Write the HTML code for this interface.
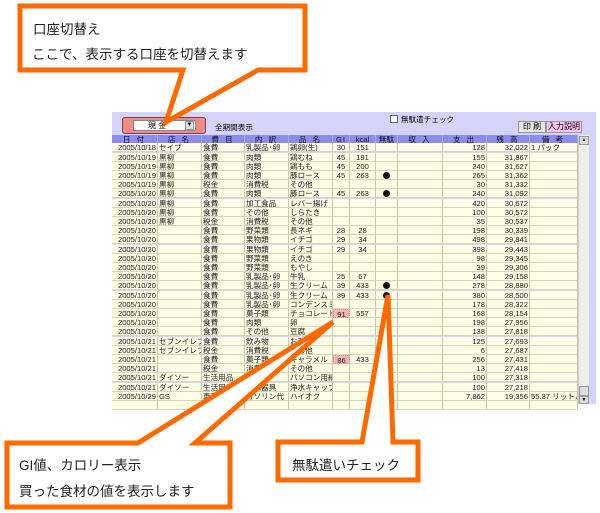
<!DOCTYPE html>
<html><head><meta charset="utf-8"><style>
*{margin:0;padding:0;box-sizing:border-box}
body{width:600px;height:513px;background:#fff;position:relative;overflow:hidden;font-family:"Liberation Sans","Noto Sans CJK JP",sans-serif}
#panel{position:absolute;left:112px;top:112px;width:484px;height:292px;background:#d4d4fa}
.r{position:absolute;left:112px;height:9.2px;display:flex;font-size:7.6px;line-height:9px;color:#222}
.r span{display:block;height:100%;border-right:1px solid #c9c9a8;border-bottom:1px solid #d6d6b8;background:#fefee6;white-space:nowrap;overflow:hidden;padding:0 1px}
.h span{background:#8c8cee;color:#111;text-align:center;border-color:#a8a8f4;letter-spacing:2px}
.c1{width:46px;text-align:right}.c2{width:44px}.c3{width:43px}.c4{width:44px}.c5{width:44px}
.c6{width:17px;text-align:center}.c7{width:26px;text-align:center}.c8{width:22px;text-align:center}
.c9{width:45px}.c10{width:44px;text-align:right}.c11{width:43px;text-align:right}.c12{width:48px}
.pk{background:#f6b6b6!important;border:1px dotted #d88!important}
.dot{display:inline-block;width:7px;height:7px;border-radius:50%;background:#111;margin-top:1px}
.t{position:absolute;font-size:13.5px;color:#222;white-space:nowrap}
</style></head><body>
<div id="panel"></div>
<div style="position:absolute;left:122px;top:117px;width:84px;height:17px;background:#f28a8a;border:1px solid #744;border-radius:3px"></div>
<div style="position:absolute;left:133px;top:120px;width:63px;height:11px;background:#fff;border:1px solid #888;font-size:8px;line-height:9px;padding-left:14px">現 金</div>
<div style="position:absolute;left:185px;top:121px;width:9px;height:9px;background:#ddd;border:1px solid #999;font-size:6px;line-height:7px;text-align:center">▼</div>
<div style="position:absolute;left:215px;top:122px;font-size:7.6px">全期間表示</div>
<div style="position:absolute;left:390px;top:115px;width:8px;height:8px;border:1px solid #666;background:#fff"></div>
<div style="position:absolute;left:401px;top:114px;font-size:7.6px">無駄遣チェック</div>
<div style="position:absolute;left:518px;top:121px;width:28px;height:12px;background:#e6e6e6;border:1px solid #999;font-size:8px;line-height:10px;text-align:center">印 刷</div>
<div style="position:absolute;left:546px;top:121px;width:36px;height:12px;background:#ffc4f4;border:1px solid #999;font-size:8px;line-height:10px;text-align:center">入力説明</div>
<div class="r h" style="top:135px"><span class="c1">日 付</span><span class="c2">店 名</span><span class="c3">費 目</span><span class="c4">内 訳</span><span class="c5">品 名</span><span class="c6" style="letter-spacing:1px">GI</span><span class="c7" style="letter-spacing:0">kcal</span><span class="c8" style="letter-spacing:0">無駄</span><span class="c9">収 入</span><span class="c10" style="text-align:center">支 出</span><span class="c11" style="text-align:center">残 高</span><span class="c12">備 考</span></div>
<div id="rows"></div>
<div style="position:absolute;left:578px;top:135px;width:11px;height:269px;background:#eeeeea;border-left:1px solid #ccc"></div>
<div style="position:absolute;left:579px;top:136px;width:10px;height:9px;background:#ddd;border:1px solid #999;font-size:5px;line-height:7px;text-align:center">▲</div>
<div style="position:absolute;left:579px;top:386px;width:10px;height:10px;background:#ddd;border:1px solid #999"></div>
<div style="position:absolute;left:579px;top:396px;width:10px;height:8px;background:#ddd;border:1px solid #999;font-size:5px;line-height:6px;text-align:center">▼</div>
<svg style="position:absolute;left:0;top:0" width="600" height="513">
<g fill="#fff" stroke="#ff6a00" stroke-width="5" stroke-linejoin="miter">
<polygon points="20,6 305,6 305,70 258,70 166,122 183,70 20,70"/>
<polygon points="7,443 138,443 333,322 195,443 230,443 230,507 7,507"/>
<polygon points="278,442 362,442 388,295 393,442 418,442 418,480 278,480"/>
</g></svg>
<div class="t" style="left:33px;top:18px">口座切替え</div>
<div class="t" style="left:32px;top:43px">ここで、表示する口座を切替えます</div>
<div class="t" style="left:19px;top:454px">GI値、カロリー表示</div>
<div class="t" style="left:19px;top:480px">買った食材の値を表示します</div>
<div class="t" style="left:292px;top:454px">無駄遣いチェック</div>
<script>
var d=[
["2005/10/18","セイブ","食費","乳製品･卵","鶏卵(生)","30","151","","128","32,022","1 パック"],
["2005/10/19","黒柳","食費","肉類","鶏むね","45","191","","155","31,867",""],
["2005/10/19","黒柳","食費","肉類","鶏もも","45","200","","240","31,627",""],
["2005/10/19","黒柳","食費","肉類","豚ロース","45","263","D","265","31,362",""],
["2005/10/19","黒柳","税金","消費税","その他","","","","30","31,332",""],
["2005/10/20","黒柳","食費","肉類","豚ロース","45","263","D","240","31,092",""],
["2005/10/20","黒柳","食費","加工食品","レバー揚げ","","","","420","30,672",""],
["2005/10/20","黒柳","食費","その他","しらたき","","","","100","30,572",""],
["2005/10/20","黒柳","税金","消費税","その他","","","","35","30,537",""],
["2005/10/20","","食費","野菜類","長ネギ","28","28","","198","30,339",""],
["2005/10/20","","食費","果物類","イチゴ","29","34","","498","29,841",""],
["2005/10/20","","食費","果物類","イチゴ","29","34","","398","29,443",""],
["2005/10/20","","食費","野菜類","えのき","","","","98","29,345",""],
["2005/10/20","","食費","野菜類","もやし","","","","39","29,306",""],
["2005/10/20","","食費","乳製品･卵","牛乳","25","67","","148","29,158",""],
["2005/10/20","","食費","乳製品･卵","生クリーム","39","433","D","278","28,880",""],
["2005/10/20","","食費","乳製品･卵","生クリーム","39","433","D","380","28,500",""],
["2005/10/20","","食費","乳製品･卵","コンデンスミ","","","","178","28,322",""],
["2005/10/20","","食費","菓子類","チョコレート","P91","557","","168","28,154",""],
["2005/10/20","","食費","肉類","卵","","","","198","27,956",""],
["2005/10/20","","食費","その他","豆腐","","","","138","27,818",""],
["2005/10/21","セブンイレブ","食費","飲み物","お茶","","","","125","27,693",""],
["2005/10/21","セブンイレブ","税金","消費税","その他","","","","6","27,687",""],
["2005/10/21","","食費","菓子類","キャラメル","P86","433","","256","27,431",""],
["2005/10/21","","税金","消費税","その他","","","","13","27,418",""],
["2005/10/21","ダイソー","生活用品","文具","パソコン用紙","","","","100","27,318",""],
["2005/10/21","ダイソー","生活用品","浄水器具","浄水キャップ","","","","100","27,218",""],
["2005/10/29","GS","車両費","ガソリン代","ハイオク","","","","7,862","19,356","55.37 リットル"],
["","","","","","","","","","",""]];
var h="";
d.forEach(function(r,i){
 h+='<div class="r" style="top:'+(143.3+i*9.2).toFixed(1)+'px">';
 for(var j=0;j<11;j++){
  var v=r[j],cls="c"+(j<7?j+1:j+2),ex="";
  if(j==7){h+='<span class="c8">'+(v=="D"?'<i class="dot"></i>':'')+'</span><span class="c9"></span>';continue;}
  if(v.charAt(0)=="P"){ex=" pk";v=v.slice(1);}
  h+='<span class="'+cls+ex+'">'+v+'</span>';
 }
 h+='</div>';
});
document.getElementById("rows").innerHTML=h;
</script>
</body></html>
